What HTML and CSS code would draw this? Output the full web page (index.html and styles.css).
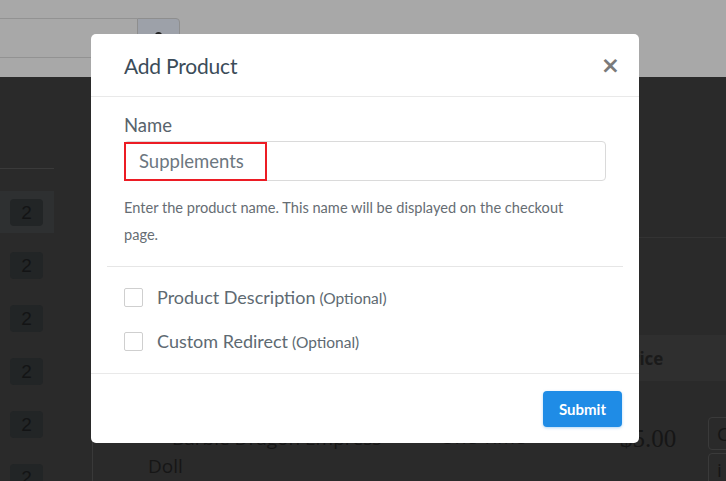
FILE: index.html
```html
<!DOCTYPE html>
<html lang="en">
<head>
    <meta charset="UTF-8">
    <meta name="viewport" content="width=device-width, initial-scale=1.0">
    <title>Add Product</title>
    <link rel="stylesheet" href="styles.css">
</head>
<body>

<!-- Page behind the dialog (already dimmed) -->
<div class="topbar">
    <div class="search">
        <div class="search-field"></div>
        <div class="search-btn"><span class="search-dot"></span></div>
    </div>
</div>

<div class="main">
    <div class="side">
        <div class="side-head"></div>
        <div class="side-row active"><span class="badge">2</span></div>
        <div class="side-row"><span class="badge">2</span></div>
        <div class="side-row"><span class="badge">2</span></div>
        <div class="side-row"><span class="badge">2</span></div>
        <div class="side-row"><span class="badge">2</span></div>
        <div class="side-row"><span class="badge">2</span></div>
    </div>

    <div class="card">
        <div class="card-top"></div>
        <div class="card-mid"></div>
        <div class="thead">
            <span class="th-name">Product</span>
            <span class="th-type">Type</span>
            <span class="th-price">Price</span>
        </div>
        <div class="trow">
            <div class="td-name"><span class="dot"></span>Barbie Dragon Empress Doll</div>
            <div class="td-type">One Time</div>
            <div class="td-price">$5.00</div>
            <div class="td-actions">
                <span class="act">C</span>
                <span class="act">i</span>
            </div>
        </div>
    </div>
</div>

<!-- Dialog -->
<div class="modal">
    <div class="modal-head">
        <h3>Add Product</h3>
        <span class="close">&times;</span>
    </div>

    <div class="modal-body">
        <div class="group">
            <label class="label">Name</label>
            <div class="field">
                <input type="text" value="Supplements">
                <span class="highlight"></span>
            </div>
            <p class="help">Enter the product name. This name will be displayed on the checkout page.</p>
        </div>

        <hr class="sep">

        <div class="group">
            <label class="check"><span class="box"></span>Product Description <small>(Optional)</small></label>
            <label class="check"><span class="box"></span>Custom Redirect <small>(Optional)</small></label>
        </div>
    </div>

    <div class="modal-foot">
        <button class="submit">Submit</button>
    </div>
</div>

</body>
</html>
```

FILE: styles.css
```css
body {
    margin: 0;
    padding: 0;
    width: 726px;
    height: 481px;
    overflow: hidden;
    background-color: #2a2a2a;
    font-family: Lato, "Open Sans", sans-serif;
}

/* background page */
.topbar {
    height: 77px;
    background-color: #a8a8a8;
    padding-top: 18px;
    box-sizing: border-box;
}
.search {
    display: flex;
    width: 180px;
    height: 40px;
}
.search-field {
    flex: 1;
    border: 1px solid #929292;
    border-left: none;
    border-right: none;
}
.search-btn {
    width: 41px;
    background-color: #9da1a9;
    border: 1px solid #8e8e8e;
    border-radius: 0 4px 4px 0;
    position: relative;
}
.search-dot {
    position: absolute;
    left: 17px;
    top: 13px;
    width: 7px;
    height: 7px;
    border-radius: 50%;
    background-color: #222;
}

.main {
    display: flex;
}
.side {
    width: 54px;
    flex-shrink: 0;
}
.side-head {
    height: 91px;
    border-bottom: 1px solid #3a3a3a;
    margin-bottom: 22px;
}
.side-row {
    height: 53px;
    padding-left: 10px;
    padding-top: 8px;
    box-sizing: border-box;
}
.side-row.active {
    height: 42px;
    background-color: #2e3031;
    margin-bottom: 11px;
}
.badge {
    display: flex;
    align-items: center;
    justify-content: center;
    width: 33px;
    height: 27px;
    border-radius: 4px;
    background-color: #222526;
    color: #131415;
    font-family: "Liberation Sans", Arial, sans-serif;
    font-size: 19px;
}

.card {
    flex: 1;
    min-width: 0;
    margin-left: 38px;
    border-left: 1px solid #393939;
}
.card-top {
    height: 160px;
    border-bottom: 1px solid #333;
}
.card-mid {
    height: 97px;
}
.thead {
    height: 46px;
    background-color: #2f2f2f;
    display: flex;
    align-items: center;
    font-family: "Open Sans", sans-serif;
    font-weight: bold;
    font-size: 17px;
    color: #1a1a1a;
    white-space: nowrap;
}
.th-name { margin-left: 56px; width: 295px; flex-shrink: 0; }
.th-type { width: 177px; flex-shrink: 0; }
.trow {
    display: flex;
    padding-top: 43px;
    color: #161616;
    font-family: "Open Sans", sans-serif;
    font-size: 19px;
    white-space: nowrap;
}
.td-name {
    margin-left: 55px;
    width: 267px;
    flex-shrink: 0;
    line-height: 28px;
    white-space: normal;
}
.dot {
    display: inline-block;
    width: 8px;
    height: 8px;
    border-radius: 50%;
    background-color: #2a5a2a;
    margin: 0 12px 2px 4px;
}
.td-type { width: 180px; margin-left: 25px; flex-shrink: 0; }
.td-price {
    width: 88px;
    flex-shrink: 0;
    font-family: "Liberation Serif", serif;
    font-size: 25px;
    line-height: 30px;
}
.td-actions {
    display: flex;
    flex-direction: column;
    gap: 3px;
    margin-top: -7px;
}
.act {
    display: block;
    width: 40px;
    height: 33px;
    border: 1px solid #3a3a3a;
    border-radius: 4px;
    padding-left: 8px;
    box-sizing: border-box;
    line-height: 33px;
}

/* dialog */
.modal {
    position: absolute;
    left: 91px;
    top: 34px;
    width: 548px;
    height: 409px;
    background-color: #fff;
    border-radius: 5px;
    display: flex;
    flex-direction: column;
}
.modal-head {
    height: 62px;
    padding: 0 19px 0 33px;
    display: flex;
    align-items: center;
    justify-content: space-between;
    border-bottom: 1px solid #e9e9e9;
}
.modal-head h3 {
    margin: 0;
    font-size: 21px;
    font-weight: normal;
    color: #3b4c59;
    letter-spacing: -0.2px;
}
.close {
    font-family: "DejaVu Sans", sans-serif;
    font-size: 23px;
    font-weight: bold;
    color: #7a7a7a;
    line-height: 1;
}

.modal-body {
    flex: 1;
    padding: 17px 16px 0;
}
.group {
    padding: 0 17px;
}
.label {
    display: block;
    font-size: 18.5px;
    line-height: 22px;
    color: #58636c;
    margin-bottom: 5px;
}
.field {
    position: relative;
}
.field input {
    display: block;
    width: 100%;
    height: 40px;
    box-sizing: border-box;
    border: 1px solid #dadada;
    border-radius: 4px;
    padding: 0 14px;
    font-family: Lato, sans-serif;
    font-size: 18.5px;
    color: #6c7780;
    outline: none;
}
.highlight {
    position: absolute;
    left: 0;
    top: 1px;
    width: 143px;
    height: 39px;
    border: 2px solid #ec1c24;
    box-sizing: border-box;
}
.help {
    margin: 13px 0 0;
    max-width: 460px;
    font-size: 14.6px;
    line-height: 27px;
    color: #666d73;
}
.sep {
    border: none;
    border-top: 1px solid #e6e6e6;
    margin: 18px 0 8px;
}
.check {
    display: flex;
    align-items: center;
    height: 44px;
    font-size: 18px;
    color: #5e6a72;
}
.check small {
    font-size: 15.5px;
    margin-left: 4px;
    margin-top: 2px;
}
.box {
    width: 19px;
    height: 19px;
    box-sizing: border-box;
    border: 1px solid #cfcfcf;
    border-radius: 2px;
    margin-right: 14px;
}

.modal-foot {
    height: 69px;
    border-top: 1px solid #e9e9e9;
    display: flex;
    align-items: center;
    justify-content: flex-end;
    padding-right: 17px;
}
.submit {
    width: 79px;
    height: 36px;
    border: none;
    border-radius: 4px;
    background-color: #1f8ce6;
    color: #fff;
    font-family: Lato, sans-serif;
    font-size: 15px;
    font-weight: bold;
    box-shadow: 0 1px 3px rgba(31, 140, 230, 0.35);
}
```
